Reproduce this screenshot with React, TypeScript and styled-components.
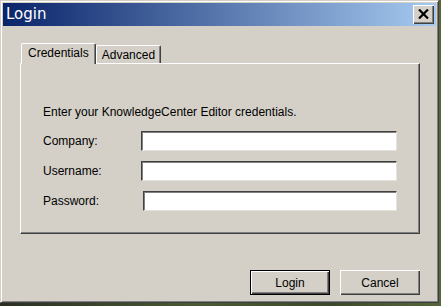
import React from 'react';
import styled, { createGlobalStyle } from 'styled-components';

const GlobalStyle = createGlobalStyle`
  body {
    margin: 0;
    background: linear-gradient(90deg, #2a2f22 0%, #4b5a32 45%, #3c4a2a 75%, #56663a 100%);
    font-family: "Liberation Sans", Arial, sans-serif;
    font-size: 12px;
    color: #000;
  }
`;

const Window = styled.div`
  width: 439px;
  height: 303px;
  box-sizing: border-box;
  background: #d4d0c8;
  border: 1px solid;
  border-color: #d4d0c8 #404040 #404040 #d4d0c8;
  box-shadow: inset 1px 1px 0 #fff, inset -1px -1px 0 #808080;
  padding: 2px;
  display: flex;
  flex-direction: column;
`;

const TitleBar = styled.div`
  height: 23px;
  background: linear-gradient(90deg, #0a246a 0%, #a6caf0 100%);
  display: flex;
  align-items: center;
  justify-content: space-between;
  padding: 0 2px 0 2px;
`;

const Title = styled.span`
  color: #fff;
  font-family: "DejaVu Sans", Verdana, sans-serif;
  font-size: 15px;
  line-height: 17px;
  padding-left: 1px;
`;

const CloseButton = styled.div`
  width: 21px;
  height: 19px;
  box-sizing: border-box;
  background: #d4d0c8;
  box-shadow: inset 1px 1px 0 #fff, inset -1px -1px 0 #404040, inset -2px -2px 0 #808080;
  display: flex;
  align-items: center;
  justify-content: center;
  padding: 0 1px 1px 0;
`;

const Body = styled.div`
  flex: 1;
  display: flex;
  flex-direction: column;
  padding: 17px 16px 0 17px;
`;

const TabStrip = styled.div`
  display: flex;
  align-items: flex-end;
  padding-left: 1px;
  height: 20px;
`;

const Tab = styled.div<{ $active?: boolean }>`
  position: relative;
  z-index: ${(p) => (p.$active ? 1 : 0)};
  height: ${(p) => (p.$active ? '21px' : '18px')};
  margin-bottom: ${(p) => (p.$active ? '-1px' : '0')};
  box-sizing: border-box;
  padding: ${(p) => (p.$active ? '0 6px 2px 6px' : '0 5px 0 5px')};
  background: #d4d0c8;
  border-top: 1px solid #fff;
  border-left: 1px solid #fff;
  border-right: 1px solid #404040;
  border-radius: 2px 2px 0 0;
  box-shadow: inset -1px 0 0 #808080;
  display: flex;
  align-items: center;
  white-space: nowrap;
`;

const Panel = styled.div`
  height: 171px;
  box-sizing: border-box;
  border: 1px solid;
  border-color: #fff #404040 #404040 #fff;
  box-shadow: inset -1px -1px 0 #808080;
  padding: 41px 22px 0 22px;
  display: flex;
  flex-direction: column;
`;

const Intro = styled.div`
  line-height: 14px;
  margin-bottom: 12px;
`;

const Fields = styled.div`
  display: flex;
  flex-direction: column;
  gap: 10px;
`;

const FieldRow = styled.div`
  display: flex;
  align-items: center;
  height: 20px;
`;

const Label = styled.label`
  width: 98px;
  flex: none;
`;

const TextInput = styled.input<{ $shift?: number }>`
  width: ${(p) => 256 - (p.$shift ?? 0)}px;
  margin: 0 0 0 ${(p) => p.$shift ?? 0}px;
  height: 20px;
  box-sizing: border-box;
  background: #fff;
  border: 1px solid;
  border-color: #404040 #e4e2dc #e4e2dc #404040;
  box-shadow: inset 1px 1px 0 #808080;
  padding: 0 3px;
  font: inherit;
  outline: none;
`;

const ButtonRow = styled.div`
  display: flex;
  justify-content: flex-end;
  gap: 10px;
  margin-top: 36px;
`;

const Button = styled.button<{ $default?: boolean }>`
  width: 80px;
  height: 25px;
  box-sizing: border-box;
  background: #d4d0c8;
  font: inherit;
  color: #000;
  padding: 0;
  border: ${(p) => (p.$default ? '1px solid #000' : 'none')};
  box-shadow: inset 1px 1px 0 #fff, inset -1px -1px 0 #404040, inset -2px -2px 0 #808080;
`;

const CloseGlyph: React.FC = () => (
  <svg width="11" height="10" viewBox="0 0 11 10">
    <path d="M1 0.5 L10 9.5 M10 0.5 L1 9.5" stroke="#000" strokeWidth="2.2" fill="none" />
  </svg>
);

const App: React.FC = () => (
  <>
    <GlobalStyle />
    <Window>
      <TitleBar>
        <Title>Login</Title>
        <CloseButton>
          <CloseGlyph />
        </CloseButton>
      </TitleBar>
      <Body>
        <TabStrip>
          <Tab $active>Credentials</Tab>
          <Tab>Advanced</Tab>
        </TabStrip>
        <Panel>
          <Intro>Enter your KnowledgeCenter Editor credentials.</Intro>
          <Fields>
            <FieldRow>
              <Label htmlFor="company">Company:</Label>
              <TextInput id="company" />
            </FieldRow>
            <FieldRow>
              <Label htmlFor="username">Username:</Label>
              <TextInput id="username" />
            </FieldRow>
            <FieldRow>
              <Label htmlFor="password">Password:</Label>
              <TextInput id="password" type="password" $shift={2} />
            </FieldRow>
          </Fields>
        </Panel>
        <ButtonRow>
          <Button $default>Login</Button>
          <Button>Cancel</Button>
        </ButtonRow>
      </Body>
    </Window>
  </>
);

export default App;
